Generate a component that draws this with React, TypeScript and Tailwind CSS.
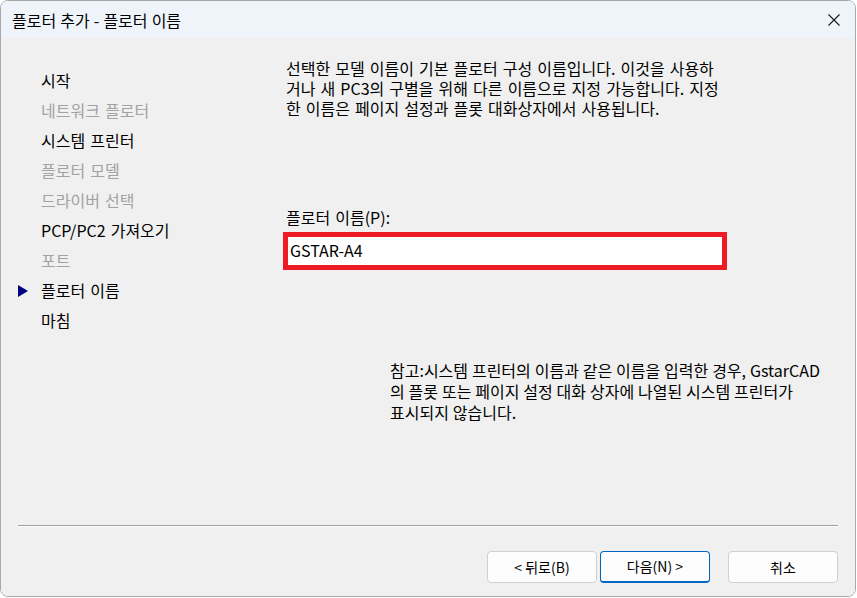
import React from "react";

type Step = {
  label: string;
  enabled: boolean;
  active?: boolean;
};

const steps: Step[] = [
  { label: "시작", enabled: true },
  { label: "네트워크 플로터", enabled: false },
  { label: "시스템 프린터", enabled: true },
  { label: "플로터 모델", enabled: false },
  { label: "드라이버 선택", enabled: false },
  { label: "PCP/PC2 가져오기", enabled: true },
  { label: "포트", enabled: false },
  { label: "플로터 이름", enabled: true, active: true },
  { label: "마침", enabled: true },
];

const StepRow = ({ label, enabled, active }: Step) => (
  <div className="flex h-[30px] items-center">
    <div className="w-[23px]">
      {active && (
        <svg width="10" height="12" viewBox="0 0 10 12" className="mt-[1px]">
          <polygon points="0,0 10,6 0,12" fill="#000080" />
        </svg>
      )}
    </div>
    <span className={enabled ? "text-black" : "text-[#a2a2a2]"}>{label}</span>
  </div>
);

const DialogButton = ({ children, primary }: { children: React.ReactNode; primary?: boolean }) => (
  <button
    className={
      "flex h-[32px] w-[110px] items-center justify-center rounded-[4px] bg-[#fdfdfd] text-[14px] text-black " +
      (primary ? "border border-[#0067c0] border-b-2" : "border border-[#d0d0d0]")
    }
  >
    {children}
  </button>
);

export default function App() {
  return (
    <div className="h-[598px] w-[857px] bg-white font-['Noto_Sans_CJK_KR','Noto_Sans',sans-serif]">
      <div className="flex h-[597px] w-[856px] flex-col overflow-hidden rounded-[8px] border border-[#a8a8a8]">
        {/* title bar */}
        <div className="flex h-[37px] shrink-0 items-center justify-between bg-[#eef4f9] pl-[11px] pr-[15px]">
          <span className="text-[16px] text-black [word-spacing:0.5px]">플로터 추가 - 플로터 이름</span>
          <svg width="12" height="12" viewBox="0 0 12 12">
            <path d="M0.5 0.5 L11.5 11.5 M11.5 0.5 L0.5 11.5" stroke="#1a1a1a" strokeWidth="1.1" />
          </svg>
        </div>

        {/* body */}
        <div className="flex flex-1 flex-col bg-[#f0f0f0] text-[16px] [word-spacing:1.5px]">
          <div className="flex flex-1">
            <div className="w-[285px] shrink-0 pl-[17px] pt-[27px] leading-[20px]">
              {steps.map((s) => (
                <StepRow key={s.label} {...s} />
              ))}
            </div>

            <div className="flex flex-col pt-[20px] leading-[20px] text-black">
              <p className="whitespace-nowrap">
                선택한 모델 이름이 기본 플로터 구성 이름입니다. 이것을 사용하
                <br />
                거나 새 PC3의 구별을 위해 다른 이름으로 지정 가능합니다. 지정
                <br />
                한 이름은 페이지 설정과 플롯 대화상자에서 사용됩니다.
              </p>

              <label className="mt-[89px]">플로터 이름(P):</label>
              <div className="-ml-[3px] mt-[5px] flex h-[38px] w-[444px] items-center border-[5px] border-[#ed1c24] bg-white pb-[2px] pl-[2px]">
                GSTAR-A4
              </div>

              <p className="ml-[104px] mt-[90px] whitespace-nowrap leading-[21px] [word-spacing:0.3px]">
                참고:시스템 프린터의 이름과 같은 이름을 입력한 경우, GstarCAD
                <br />
                의 플롯 또는 페이지 설정 대화 상자에 나열된 시스템 프린터가
                <br />
                표시되지 않습니다.
              </p>
            </div>
          </div>

          {/* footer */}
          <div className="mx-[17px] h-[2px] border-t border-b border-t-[#a0a0a0] border-b-white" />
          <div className="flex justify-end pb-[13px] pr-[17px] pt-[24px] [word-spacing:0px]">
            <div className="flex gap-[3px]">
              <DialogButton>&lt; 뒤로(B)</DialogButton>
              <DialogButton primary>다음(N) &gt;</DialogButton>
            </div>
            <div className="ml-[18px]">
              <DialogButton>취소</DialogButton>
            </div>
          </div>
        </div>
      </div>
    </div>
  );
}
